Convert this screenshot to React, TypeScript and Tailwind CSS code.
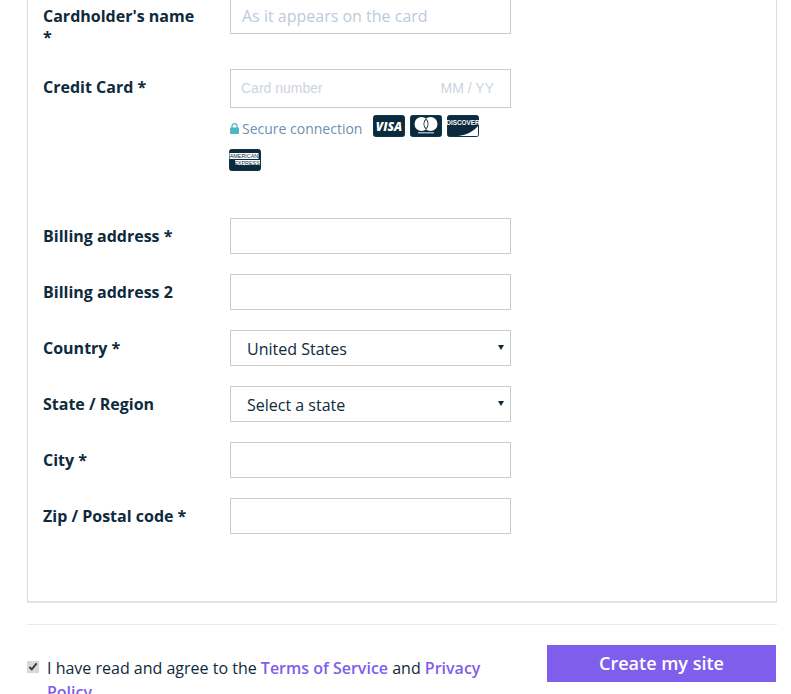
const labelClass = "w-[187px] shrink-0 pr-[30px] pt-[8px] text-[16px] font-bold leading-[21px] text-[#0e2a3b]";
const inputClass = "h-[36px] w-[281px] border border-[#cccccc] bg-white px-[11px] text-[16px] text-[#0e2a3b] outline-none placeholder:text-[#bccadd]";

const Field = ({ label, children }: { label: string; children: React.ReactNode }) => (
  <div className="flex h-[36px]">
    <label className={labelClass}>{label}</label>
    {children}
  </div>
);

const Select = ({ value }: { value: string }) => (
  <div className="relative h-[36px] w-[281px]">
    <select className="h-full w-full appearance-none border border-[#cccccc] bg-white pl-[16px] pt-[2px] text-[16px] text-[#0e2a3b] outline-none" defaultValue={value}>
      <option>{value}</option>
    </select>
    <span className="pointer-events-none absolute left-[268px] top-[15px] h-0 w-0 border-x-[3px] border-t-[5px] border-x-transparent border-t-[#0e2a3b]" />
  </div>
);

const CardIcon = ({ children }: { children: React.ReactNode }) => (
  <svg className="h-[22px] w-[32px] shrink-0" viewBox="0 0 32 22">
    <rect x="0.5" y="0.5" width="31" height="21" rx="2" fill="#0b2a3d" stroke="#12344a" />
    {children}
  </svg>
);

const App = () => {
  return (
    <div className="h-[694px] overflow-hidden bg-white font-['Open_Sans',sans-serif]">
      <div className="-mt-[2px] ml-[27px] w-[750px]">
        <div className="h-[604px] border-x border-b border-[#dcdfe0] pl-[15px] shadow-[0_1px_1px_#e8e8e8]">
          <Field label="Cardholder's name *">
            <input className={inputClass} placeholder="As it appears on the card" />
          </Field>

          <div className="mt-[35px] flex">
            <label className={labelClass}>Credit Card *</label>
            <div className="w-[281px]">
              <div className="flex h-[39px] items-center border border-[#cccccc] pl-[10px] pr-[16px] font-['Liberation_Sans',sans-serif] text-[14px]">
                <input className="w-[180px] outline-none placeholder:text-[#ccd4dd]" placeholder="Card number" />
                <input className="ml-auto w-[56px] text-right outline-none placeholder:text-[#ccd4dd]" placeholder="MM / YY" />
              </div>
              <div className="-ml-px mt-[7px] flex flex-wrap items-start gap-x-[5px] gap-y-[10px]">
                <div className="mr-[5px] mt-[2px] flex h-[22px] w-[134px] items-center whitespace-nowrap pl-px text-[14px] text-[#6d90b3]">
                  <svg className="mr-[3px] h-[11px] w-[9px] shrink-0" viewBox="0 0 9 11">
                    <path d="M2 5V3.2a2.5 2.5 0 0 1 5 0V5" fill="none" stroke="#4bb8c8" strokeWidth="1.3" />
                    <rect x="0" y="4.5" width="9" height="6.5" rx="1" fill="#4bb8c8" />
                  </svg>
                  Secure connection
                </div>
                <CardIcon>
                  <text x="16" y="15.5" textAnchor="middle" fill="#fff" fontSize="12" fontWeight="800" fontStyle="italic" fontFamily="'Open Sans',sans-serif">VISA</text>
                </CardIcon>
                <CardIcon>
                  <circle cx="11.5" cy="9" r="7" fill="#fff" />
                  <circle cx="20.5" cy="9" r="7" fill="#fff" />
                  <path d="M16 3.6a7 7 0 0 1 0 10.8a7 7 0 0 1 0-10.8z" fill="#0b2a3d" />
                  <path d="M16 4.8a6 6 0 0 1 0 8.4a6 6 0 0 1 0-8.4z" fill="#fff" />
                  <rect x="8" y="17" width="16" height="1.5" fill="#9fb0bb" />
                </CardIcon>
                <CardIcon>
                  <path d="M31 11V20a1 1 0 0 1-1 1H11C20 20 27 16 31 11z" fill="#fff" />
                  <text x="16" y="9.5" textAnchor="middle" fill="#fff" fontSize="6.4" fontWeight="700" fontFamily="'Liberation Sans',sans-serif">DISCOVER</text>
                </CardIcon>
                <CardIcon>
                  <rect x="0.5" y="4" width="29" height="6" fill="#fff" />
                  <rect x="6" y="11" width="25" height="5" fill="#fff" />
                  <text x="15" y="9" textAnchor="middle" fill="#0b2a3d" fontSize="5.4" fontFamily="'Liberation Sans',sans-serif">AMERICAN</text>
                  <text x="18" y="15.5" textAnchor="middle" fill="#0b2a3d" fontSize="5.4" fontFamily="'Liberation Sans',sans-serif">EXPRESS</text>
                </CardIcon>
              </div>
            </div>
          </div>

          <div className="mt-[47px] flex flex-col gap-[20px]">
            <Field label="Billing address *">
              <input className={inputClass} />
            </Field>
            <Field label="Billing address 2">
              <input className={inputClass} />
            </Field>
            <Field label="Country *">
              <Select value="United States" />
            </Field>
            <Field label="State / Region">
              <Select value="Select a state" />
            </Field>
            <Field label="City *">
              <input className={inputClass} />
            </Field>
            <Field label="Zip / Postal code *">
              <input className={inputClass} />
            </Field>
          </div>
        </div>

        <div className="mt-[22px] border-t border-[#e3ebf1] pt-[20px]">
          <div className="flex items-start justify-between pr-px">
            <div className="flex w-[470px] pt-[11px] text-[16px] leading-[24px] text-[#0e2a3b]">
              <input type="checkbox" defaultChecked className="mt-[5px] h-[12px] w-[12px] shrink-0 accent-[#d9d9d9]" />
              <p className="ml-[8px]">
                I have read and agree to the <a className="font-semibold text-[#7f5eeb]">Terms of Service</a> and <a className="font-semibold text-[#7f5eeb]">Privacy Policy</a>
              </p>
            </div>
            <button className="h-[37px] w-[229px] bg-[#7f5eeb] text-[18px] font-semibold text-white">Create my site</button>
          </div>
        </div>
      </div>
    </div>
  );
};

export default App;
